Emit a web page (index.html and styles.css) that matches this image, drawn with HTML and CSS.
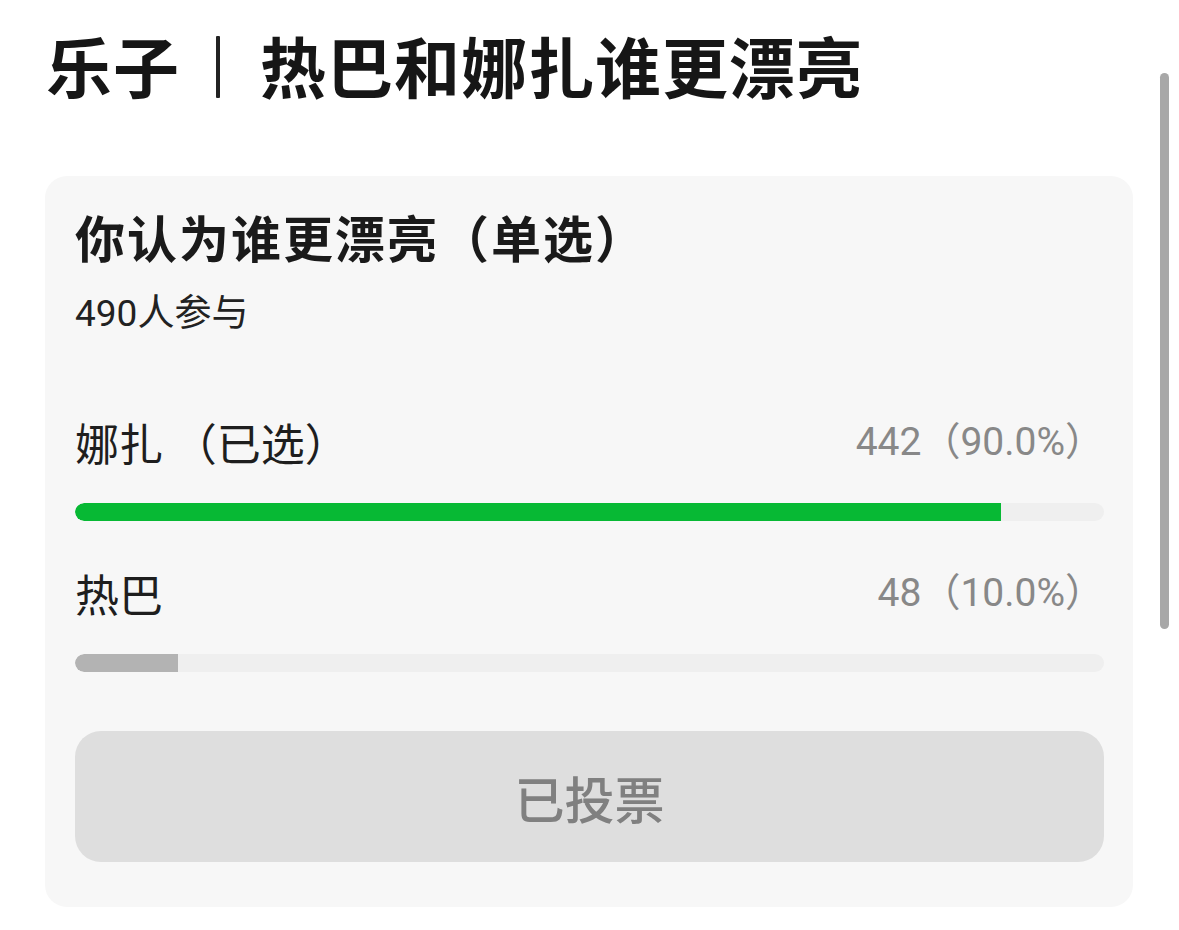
FILE: index.html
```html
<!DOCTYPE html>
<html lang="zh-CN">
<head>
<meta charset="utf-8">
<title>乐子 | 热巴和娜扎谁更漂亮</title>
<link rel="stylesheet" href="styles.css">
</head>
<body>
<main class="page">
  <h1 class="post-title">乐子<span class="sep" aria-label="|"></span>热巴和娜扎谁更漂亮</h1>

  <section class="poll">
    <h2 class="poll-question">你认为谁更漂亮（单选）</h2>
    <p class="poll-count">490人参与</p>

    <div class="option first">
      <div class="option-head">
        <span class="option-name">娜扎 <span class="chosen">（已选）</span></span>
        <span class="option-result">442（90.0%）</span>
      </div>
      <div class="track"><div class="fill fill-chosen" style="width:90%"></div></div>
    </div>

    <div class="option">
      <div class="option-head">
        <span class="option-name">热巴</span>
        <span class="option-result">48（10.0%）</span>
      </div>
      <div class="track"><div class="fill" style="width:10%"></div></div>
    </div>

    <button class="vote-btn" disabled>已投票</button>
  </section>

  <div class="scroll-thumb"></div>
</main>
</body>
</html>
```

FILE: styles.css
```css
* {
  box-sizing: border-box;
}

html, body {
  margin: 0;
  padding: 0;
  background: #ffffff;
}

body {
  font-family: "Noto Sans CJK SC", "Noto Sans", sans-serif;
  color: #1a1a1a;
}

.page {
  position: relative;
  width: 1179px;
  height: 930px;
  overflow: hidden;
}

.post-title {
  margin: 24px 0 0 46px;
  font-size: 66px;
  line-height: 80px;
  font-weight: 700;
  letter-spacing: 1px;
  color: #161616;
  display: flex;
  align-items: center;
}

/* thin vertical divider between the column name and the topic */
.sep {
  display: block;
  width: 4px;
  height: 62px;
  margin: 6px 40px 0 36px;
  background: #222;
  border-radius: 1px;
}

.poll {
  margin: 72px 0 0 45px;
  width: 1088px;
  background: #f7f7f7;
  border-radius: 22px;
  padding: 30px 29px 45px 30px;
}

.poll-question {
  margin: 0;
  font-size: 50px;
  line-height: 60px;
  font-weight: 700;
  letter-spacing: 2px;
  color: #1a1a1a;
}

.poll-count {
  margin: 28px 0 0;
  font-family: "Roboto", "Noto Sans CJK SC", sans-serif;
  font-size: 37px;
  line-height: 40px;
  color: #222;
}

.option {
  margin-top: 46px;
}

.option.first {
  margin-top: 82px;
}

.option-head {
  display: flex;
  justify-content: space-between;
  align-items: center;
  height: 52px;
}

.option-name {
  font-size: 44px;
  line-height: 52px;
  color: #1e1e1e;
}

.chosen {
  color: #1e1e1e;
}

.option-result {
  font-family: "Roboto", "Noto Sans CJK SC", sans-serif;
  font-size: 39px;
  line-height: 52px;
  color: #888888;
}

.track {
  margin-top: 35px;
  height: 18px;
  background: #efefef;
  border-radius: 9px;
  overflow: hidden;
}

.fill {
  height: 100%;
  background: #b3b3b3;
  border-radius: 9px 0 0 9px;
}

.fill-chosen {
  background: #07b934;
}

.vote-btn {
  display: block;
  width: 100%;
  height: 131px;
  margin-top: 59px;
  border: none;
  border-radius: 26px;
  background: #dedede;
  font-family: inherit;
  font-size: 50px;
  font-weight: 500;
  color: #808080;
  padding: 0;
}

.scroll-thumb {
  position: absolute;
  left: 1160px;
  top: 73px;
  width: 9px;
  height: 556px;
  border-radius: 5px;
  background: #a8a8a8;
}
```
